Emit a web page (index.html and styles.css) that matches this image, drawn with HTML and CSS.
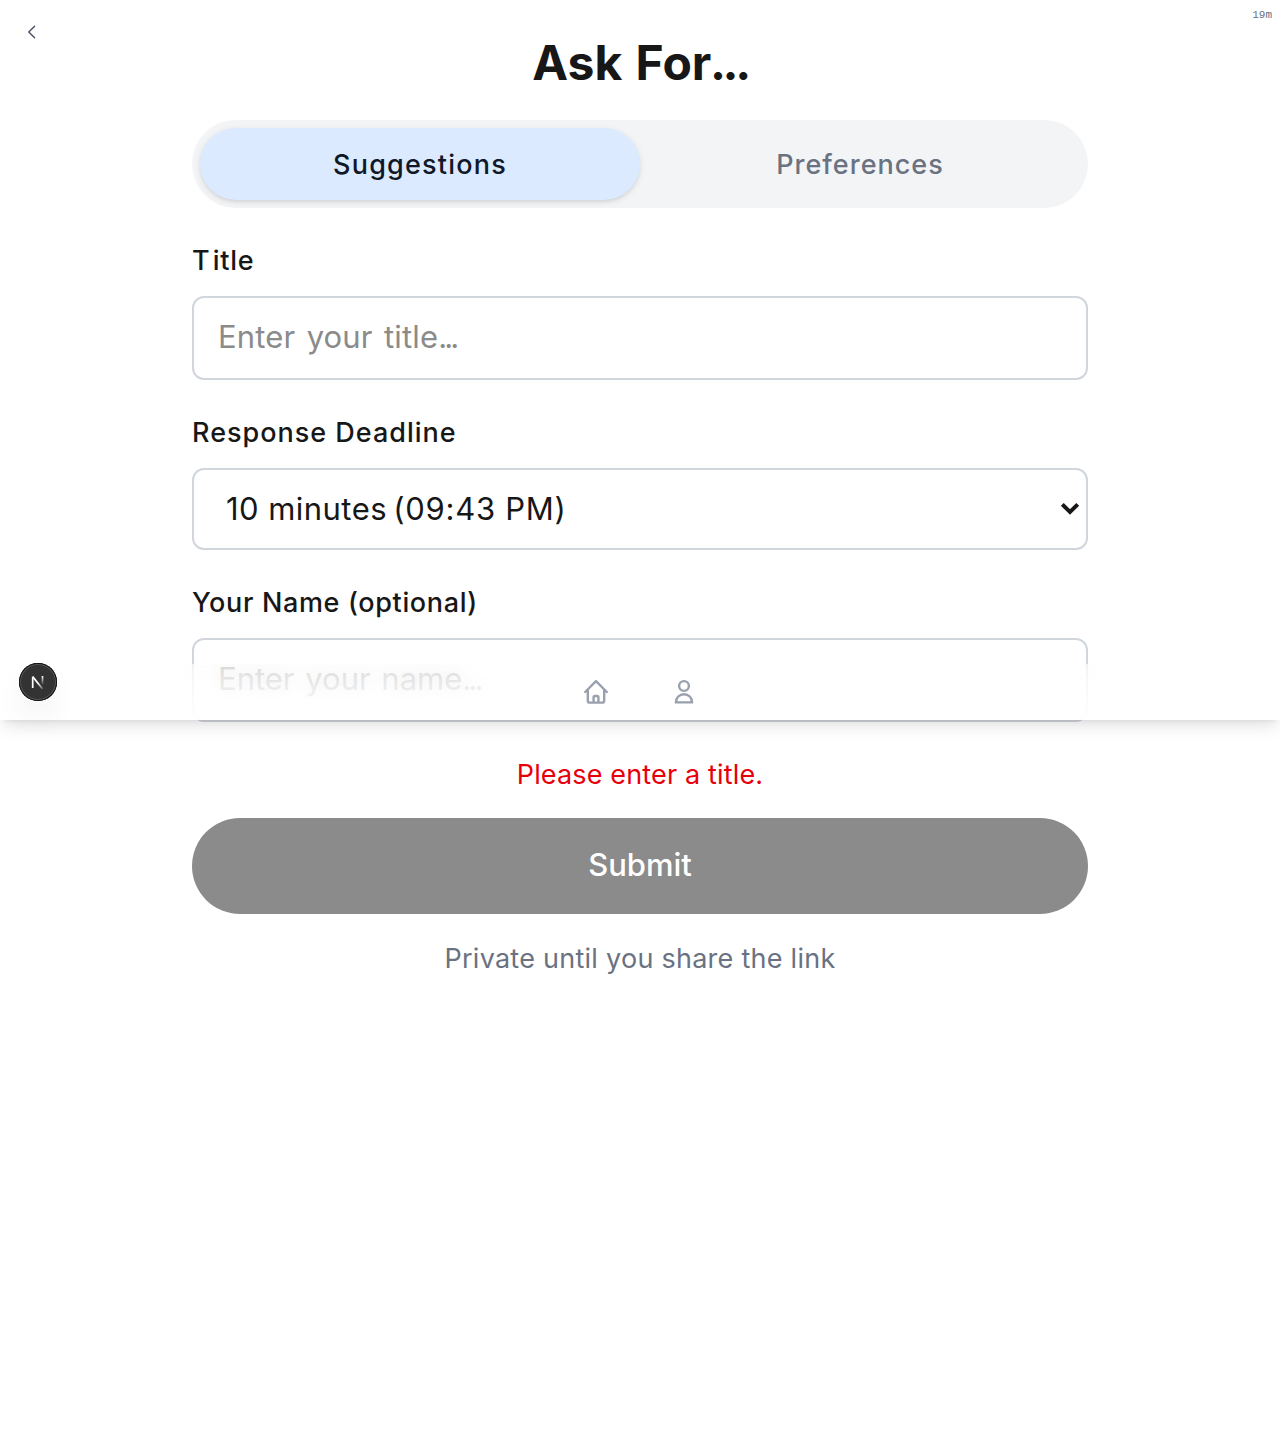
FILE: index.html
```html
<!DOCTYPE html>
<html lang="en">
<head>
<meta charset="utf-8">
<title>Ask For...</title>
<link rel="stylesheet" href="styles.css">
</head>
<body>
<button class="back" aria-label="Back"><svg width="20" height="20" viewBox="0 0 20 20" fill="none" stroke="#4a5565" stroke-width="1.5" stroke-linecap="round" stroke-linejoin="round"><path d="M12.6 4.2 6.8 10l5.8 5.8"/></svg></button>
<span class="age">19m</span>
<main class="page">
  <h1 class="heading">Ask For<span class="dots">...</span></h1>
  <div class="tabs">
    <button class="tab tab-active">Suggestions</button>
    <button class="tab">Preferences</button>
  </div>
  <form class="form">
    <div class="field">
      <label class="label label-title"><span class="initial">T</span>itle</label>
      <div class="control control-text"><span class="placeholder">Enter your title<span class="dots">...</span></span></div>
    </div>
    <div class="field">
      <label class="label label-deadline">Response Deadline</label>
      <div class="control control-select"><span class="value">10 minutes <span class="time">(09:43 PM)</span></span>
        <svg class="chevron" width="20" height="14" viewBox="0 0 20 14" fill="none" stroke="#171717" stroke-width="4"><path d="m2.3 2.300 7.700 7.700 7.700-7.700"/></svg>
      </div>
    </div>
    <div class="field">
      <label class="label label-name">Your Name (optional)</label>
      <div class="control control-text"><span class="placeholder placeholder-name">Enter your name<span class="dots">...</span></span></div>
    </div>
    <p class="error">Please enter a title.</p>
    <button class="submit" type="button">Submit</button>
    <p class="note">Private until you share the link</p>
  </form>
</main>
<nav class="bottom-nav">
  <svg width="32" height="32" viewBox="0 0 32 32" fill="none" stroke="#99a1af" stroke-width="2.4" stroke-linecap="round" stroke-linejoin="round"><path d="M5.2 16 16 5.200 26.800 16M7.800 13.500v11.200c0 1.100.8 1.900 1.900 1.900h12.600c1.100 0 1.900-.8 1.900-1.900V13.500M13.600 26.500v-5.200c0-.8.5-1.300 1.300-1.300h2.200c.8 0 1.300.5 1.300 1.300v5.200"/></svg>
  <svg width="32" height="32" viewBox="0 0 32 32" fill="none" stroke="#99a1af" stroke-width="2.4" stroke-linecap="round" stroke-linejoin="round"><circle cx="16" cy="10" r="4.900"/><path d="M7.900 26.400c0-4.800 3.500-8.200 8.100-8.200s8.100 3.400 8.100 8.200z"/></svg>
</nav>
<div class="badge"><svg width="38" height="38" viewBox="0 0 38 38" fill="none"><defs><linearGradient id="stem" x1="0" y1="13" x2="0" y2="22" gradientUnits="userSpaceOnUse"><stop stop-color="#fff"/><stop offset="1" stop-color="#fff" stop-opacity="0"/></linearGradient><linearGradient id="diag" x1="20" y1="19" x2="25" y2="25" gradientUnits="userSpaceOnUse"><stop stop-color="#fff"/><stop offset="1" stop-color="#fff" stop-opacity=".25"/></linearGradient></defs><path d="M13.700 25V13.700" stroke="#fff" stroke-width="1.700"/><path d="m13.700 13.600 9.700 12.200" stroke="url(#diag)" stroke-width="1.700"/><path d="M23.500 13v9" stroke="url(#stem)" stroke-width="1.700"/></svg></div>
</body>
</html>
```
FILE: styles.css
```css
* { box-sizing: border-box; }
body {
  position: relative;
  margin: 0;
  min-height: 1440px;
  background: #fff;
  color: #171717;
  font-family: Inter, "Liberation Sans", sans-serif;
}
button { border: 0; padding: 0; background: none; color: inherit; font: inherit; }
p, h1 { margin: 0; }
.back { position: absolute; left: 22px; top: 22px; width: 20px; height: 20px; }
.back svg { display: block; }
.age {
  position: absolute;
  right: 8px;
  top: 8px;
  font: 11px/14px "Liberation Mono", monospace;
  color: #6a7282;
}
.page { width: 896px; margin: 0 auto; padding-top: 35px; }
.heading { height: 56px; font-size: 48px; line-height: 56px; font-weight: 700; text-align: center; word-spacing: 2px; }
.heading .dots { letter-spacing: -3.4px; margin-left: -1.5px; }
.tabs {
  display: flex;
  height: 88px;
  margin-top: 29px;
  padding: 8px;
  border-radius: 44px;
  background: #f3f4f6;
}
.tab { flex: 1; border-radius: 36px; font-size: 27px; font-weight: 500; color: #6a7282; letter-spacing: 1px; }
.tab-active { background: #dbeafe; color: #101828; letter-spacing: 1.2px; box-shadow: 0 2px 6px rgba(0,0,0,.1), 0 2px 4px -2px rgba(0,0,0,.1); }
.form { display: flex; flex-direction: column; }
.field { display: flex; flex-direction: column; gap: 16px; margin-top: 32px; }
.label { height: 40px; font-size: 27px; line-height: 42px; font-weight: 500; white-space: nowrap; }
.label-title { letter-spacing: .7px; }
.initial { margin-right: 2.5px; }
.label-deadline { letter-spacing: 1px; }
.label-name { letter-spacing: .65px; }
.control {
  display: flex;
  align-items: center;
  border: 2px solid #d1d5dc;
  border-radius: 12px;
  font-size: 31px;
  white-space: nowrap;
}
.control-text { height: 84px; padding: 0 24px 3px; }
.control-select { height: 82px; padding: 0 6px 0 32px; justify-content: space-between; }
.placeholder { color: #8b8b8b; letter-spacing: .15px; word-spacing: 2.5px; }
.placeholder-name { letter-spacing: 0; word-spacing: 2px; }
.placeholder .dots { letter-spacing: -2.9px; }
.value { letter-spacing: .45px; padding-bottom: 1px; }
.time { letter-spacing: .75px; margin-left: -3px; }
.error { margin-top: 32px; font-size: 27px; line-height: 42px; height: 40px; color: #e7000b; text-align: center; letter-spacing: .15px; }
.submit { height: 96px; margin-top: 24px; padding-bottom: 4px; border-radius: 48px; background: #8b8b8b; color: #fff; font-size: 31px; font-weight: 500; }
.note { margin-top: 24px; font-size: 27px; line-height: 42px; height: 40px; color: #6a7282; text-align: center; letter-spacing: .26px; }
.bottom-nav {
  position: absolute;
  top: 664px;
  left: 0;
  right: 0;
  height: 56px;
  display: flex;
  justify-content: center;
  align-items: center;
  gap: 56px;
  box-shadow: 0 10px 15px -3px rgba(0,0,0,.1), 0 4px 6px -4px rgba(0,0,0,.1);
}
.bottom-nav::before { content: ""; position: absolute; inset: 0; backdrop-filter: blur(8px); opacity: .5; }
.bottom-nav::after { content: ""; position: absolute; inset: 0; background: linear-gradient(rgba(255,255,255,.55), rgba(255,255,255,.95)); }
.bottom-nav svg { position: relative; z-index: 1; }
.badge {
  position: absolute;
  left: 19px;
  top: 663px;
  width: 38px;
  height: 38px;
  border-radius: 50%;
  background: #333;
  box-shadow: inset 0 0 0 1px #111, inset 0 0 0 2px #555, 0 16px 32px -8px rgba(0,0,0,.14);
}
.badge svg { display: block; }
```
